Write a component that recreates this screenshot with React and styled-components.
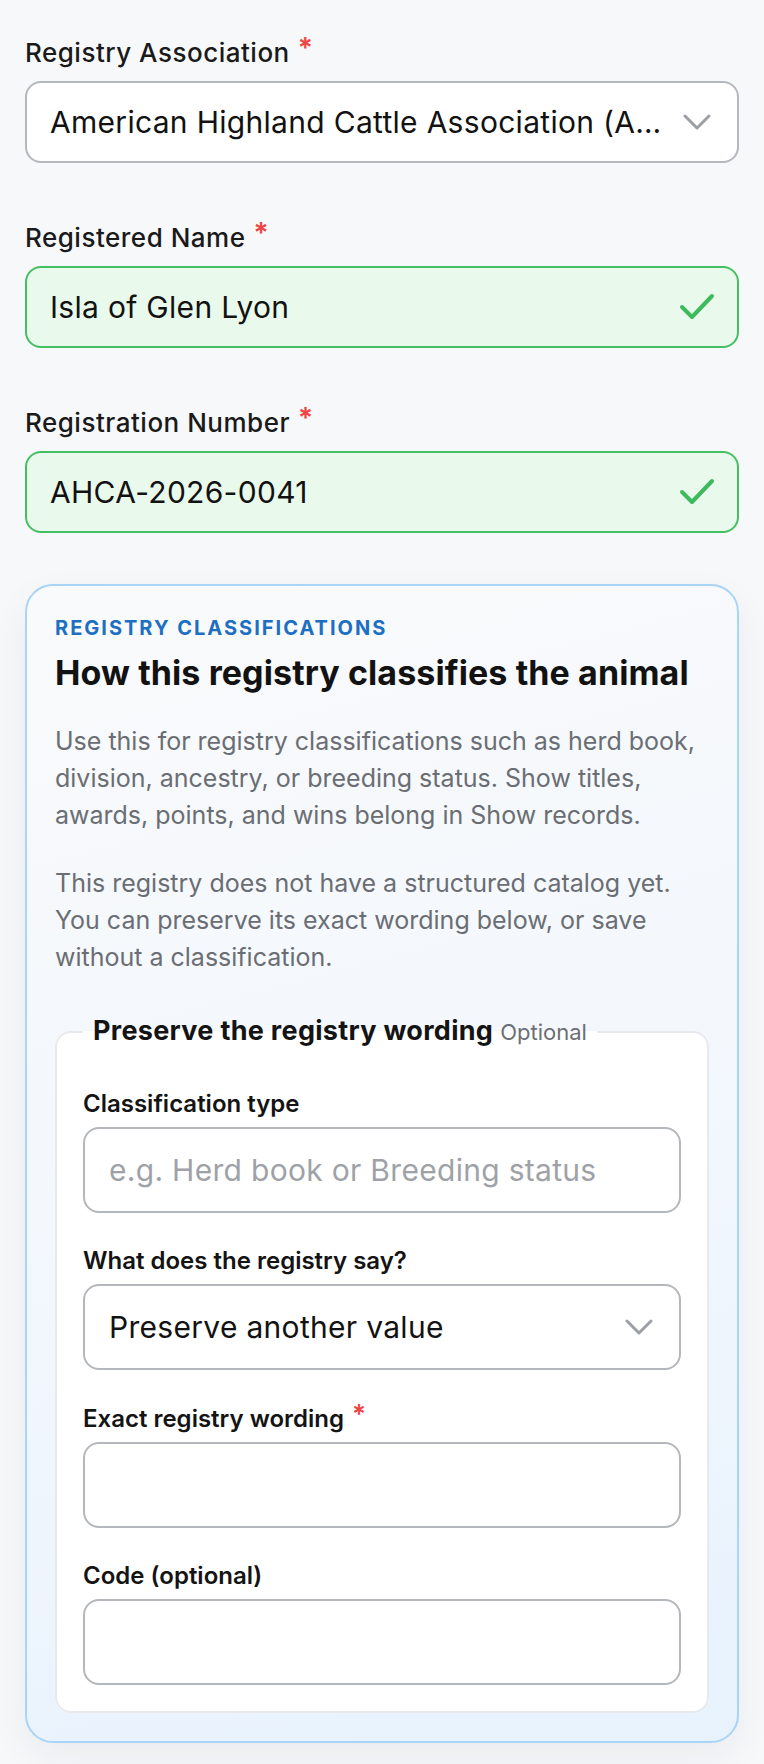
import React from 'react'
import styled, { createGlobalStyle } from 'styled-components'

const GlobalStyle = createGlobalStyle`
  *, *::before, *::after { box-sizing: border-box; }
  html, body {
    margin: 0;
    padding: 0;
    background: #f7f8fa;
    font-family: Inter, "Noto Sans", "Liberation Sans", sans-serif;
    color: #161616;
  }
`

const App = () => {
    return (
        <Page>
            <GlobalStyle />

            <Field>
                <Label>Registry Association<Req>*</Req></Label>
                <Box>
                    <Value>American Highland Cattle Association (AHCA)</Value>
                    <Chevron />
                </Box>
            </Field>

            <Field>
                <Label>Registered Name<Req>*</Req></Label>
                <Box $valid>
                    <Value>Isla of Glen Lyon</Value>
                    <Check />
                </Box>
            </Field>

            <Field>
                <Label>Registration Number<Req>*</Req></Label>
                <Box $valid>
                    <Value>AHCA-2026-0041</Value>
                    <Check />
                </Box>
            </Field>

            <Card>
                <Eyebrow>Registry classifications</Eyebrow>
                <Heading>How this registry classifies the animal</Heading>
                <Body>
                    Use this for registry classifications such as herd book, division, ancestry,
                    or breeding status. Show titles, awards, points, and wins belong in Show records.
                </Body>
                <Body>
                    This registry does not have a structured catalog yet. You can preserve its exact
                    wording below, or save without a classification.
                </Body>

                <Group>
                    <Legend>
                        Preserve the registry wording<Optional>Optional</Optional>
                    </Legend>

                    <SubField>
                        <SubLabel>Classification type</SubLabel>
                        <SubBox>
                            <Placeholder>e.g. Herd book or Breeding status</Placeholder>
                        </SubBox>
                    </SubField>

                    <SubField>
                        <SubLabel>What does the registry say?</SubLabel>
                        <SubBox>
                            <Value>Preserve another value</Value>
                            <Chevron />
                        </SubBox>
                    </SubField>

                    <SubField>
                        <SubLabel>Exact registry wording<Req $small>*</Req></SubLabel>
                        <SubBox />
                    </SubField>

                    <SubField>
                        <SubLabel>Code (optional)</SubLabel>
                        <SubBox />
                    </SubField>
                </Group>
            </Card>
        </Page>
    )
}

export default App

const Chevron = () => (
    <ChevronIcon width="28" height="16" viewBox="0 0 28 16" fill="none">
        <polyline points="2 2 14 14 26 2" stroke="currentColor" strokeWidth="3" strokeLinecap="round" strokeLinejoin="round" />
    </ChevronIcon>
)

const Check = () => (
    <CheckIcon width="36" height="28" viewBox="0 0 36 28" fill="none">
        <polyline points="3 14 13 24 33 3" stroke="currentColor" strokeWidth="4" strokeLinecap="round" strokeLinejoin="round" />
    </CheckIcon>
)

const Page = styled.div`
  padding: 37px 25px 24px;
  display: flex;
  flex-direction: column;
`

const Field = styled.div`
  display: flex;
  flex-direction: column;
  margin-bottom: 59px;
  &:nth-of-type(3) { margin-bottom: 51px; }
`

const Label = styled.label`
  font-size: 26px;
  line-height: 31px;
  font-weight: 500;
  letter-spacing: 0.5px;
  color: #1a1a1a;
  margin-bottom: 13px;
`

const Req = styled.span`
  color: #ef4444;
  margin-left: 8px;
  font-size: ${p => (p.$small ? '26px' : '28px')};
  font-weight: 600;
  position: relative;
  top: -4px;
`

const Box = styled.div`
  height: 82px;
  display: flex;
  align-items: center;
  gap: 20px;
  padding: 0 22px 0 23px;
  border: 2px solid ${p => (p.$valid ? '#44c062' : '#b4b8bc')};
  background: ${p => (p.$valid ? '#e9f9ec' : '#ffffff')};
  border-radius: 16px;
`

const Value = styled.span`
  flex: 1;
  min-width: 0;
  font-size: 30px;
  letter-spacing: 0.3px;
  color: #121212;
  white-space: nowrap;
  overflow: hidden;
  text-overflow: ellipsis;
`

const Placeholder = styled(Value)`
  color: #9ea2a7;
`

const ChevronIcon = styled.svg`
  flex-shrink: 0;
  color: #9ca0a6;
  margin-right: 4px;
`

const CheckIcon = styled.svg`
  flex-shrink: 0;
  color: #3dba5c;
  margin-left: auto;
`

const Card = styled.section`
  border: 2px solid #a8d4f7;
  border-radius: 28px;
  padding: 30px 28px 28px;
  background: linear-gradient(165deg, #f9fafb 0%, #f2f7fd 55%, #e7f2fd 100%);
  box-shadow: 0 14px 36px rgba(20, 30, 50, 0.06);
`

const Eyebrow = styled.div`
  font-size: 20px;
  line-height: 24px;
  font-weight: 700;
  letter-spacing: 2px;
  text-transform: uppercase;
  color: #1d6fc2;
`

const Heading = styled.h2`
  margin: 14px 0 0;
  font-size: 34px;
  line-height: 38px;
  font-weight: 700;
  letter-spacing: 0.1px;
  color: #121212;
`

const Body = styled.p`
  margin: 31px 0 0;
  font-size: 25px;
  line-height: 37px;
  color: #6a6e74;
`

const Group = styled.fieldset`
  margin: 39px 0 0;
  padding: 42px 26px 26px;
  border: 2px solid #e8e9ec;
  border-radius: 16px;
  background: #ffffff;
  min-width: 0;
`

const Legend = styled.legend`
  padding: 0 10px;
  font-size: 27px;
  line-height: 31px;
  font-weight: 700;
  letter-spacing: 0.3px;
  color: #141414;
`

const Optional = styled.span`
  margin-left: 7px;
  font-size: 22px;
  font-weight: 400;
  letter-spacing: 0;
  color: #6b6f75;
`

const SubField = styled.div`
  display: flex;
  flex-direction: column;
  & + & { margin-top: 34px; }
`

const SubLabel = styled.label`
  font-size: 24px;
  line-height: 27px;
  font-weight: 600;
  color: #141414;
  margin-bottom: 10px;
`

const SubBox = styled.div`
  height: 86px;
  display: flex;
  align-items: center;
  gap: 20px;
  padding: 0 22px 0 24px;
  border: 2px solid #b4b8bc;
  border-radius: 16px;
  background: #ffffff;
`
